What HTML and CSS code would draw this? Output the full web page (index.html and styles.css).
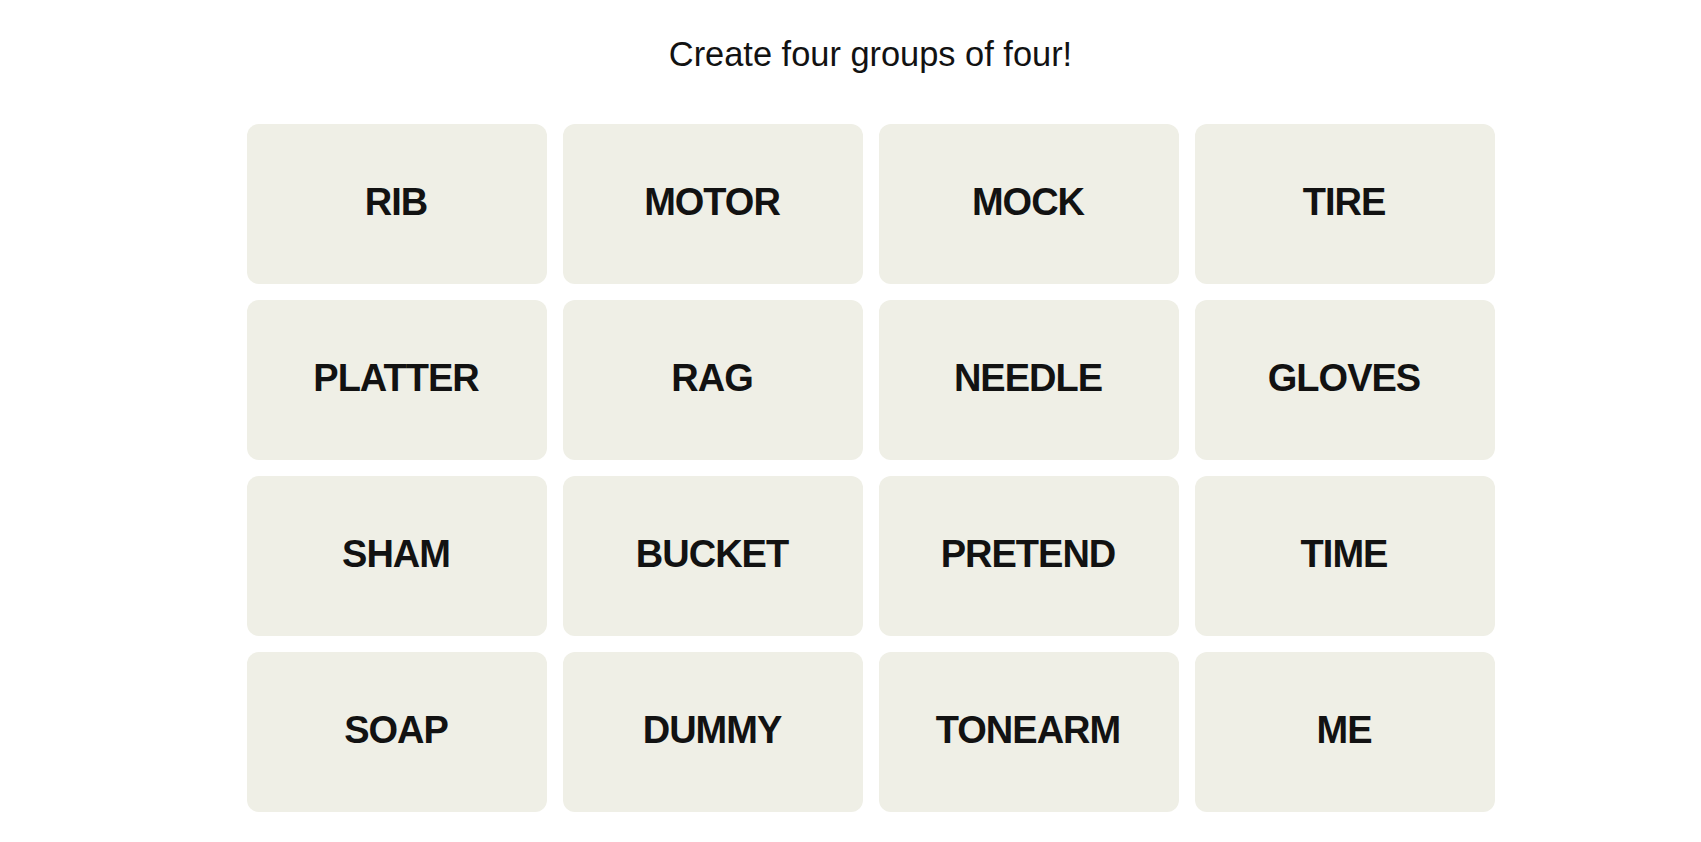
FILE: index.html
```html
<!DOCTYPE html>
<html>
<head>
<meta charset="utf-8">
<link rel="stylesheet" href="styles.css">
</head>
<body>
<main class="page">
  <h1 class="prompt">Create four groups of four!</h1>
  <div class="board">
    <div class="tile">RIB</div>
    <div class="tile">MOTOR</div>
    <div class="tile">MOCK</div>
    <div class="tile">TIRE</div>
    <div class="tile">PLATTER</div>
    <div class="tile">RAG</div>
    <div class="tile">NEEDLE</div>
    <div class="tile">GLOVES</div>
    <div class="tile">SHAM</div>
    <div class="tile">BUCKET</div>
    <div class="tile">PRETEND</div>
    <div class="tile">TIME</div>
    <div class="tile">SOAP</div>
    <div class="tile">DUMMY</div>
    <div class="tile">TONEARM</div>
    <div class="tile">ME</div>
  </div>
</main>
</body>
</html>
```

FILE: styles.css
```css
html, body {
  margin: 0;
  padding: 0;
  background: #ffffff;
}

body {
  font-family: "Liberation Sans", Arial, sans-serif;
  color: #121212;
}

.page {
  display: flex;
  flex-direction: column;
  align-items: center;
  padding-left: 40px;
  padding-top: 34px;
}

.prompt {
  margin: 0;
  font-size: 34.4px;
  font-weight: 400;
  line-height: 40px;
  text-align: center;
}

.board {
  margin-top: 50px;
  display: grid;
  grid-template-columns: repeat(4, 300px);
  grid-auto-rows: 160px;
  gap: 16px;
}

.tile {
  background: #efefe6;
  border-radius: 12px;
  display: flex;
  align-items: center;
  justify-content: center;
  padding-bottom: 3px;
  box-sizing: border-box;
  font-size: 38px;
  font-weight: 700;
  letter-spacing: -1px;
  text-indent: -1px;
  text-transform: uppercase;
  color: #121212;
}
```
